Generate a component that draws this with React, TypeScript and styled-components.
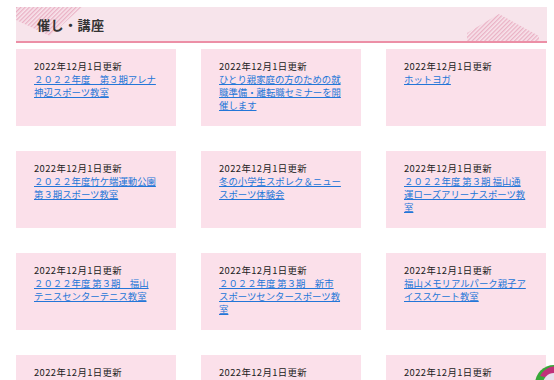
import React from "react";
import styled, { createGlobalStyle } from "styled-components";

const Global = createGlobalStyle`
  html, body { margin: 0; padding: 0; background: #fff; overflow: hidden; }
  body { font-family: "Noto Sans CJK JP", "Noto Sans", sans-serif; color: #222; }
`;

const Page = styled.div`
  padding: 7px 0 0 16px;
  width: 531px;
`;

const Header = styled.div`
  position: relative;
  height: 34px;
  background: #f7e4eb;
  border-bottom: 2px solid #ec8fa6;
  display: flex;
  align-items: center;
  padding-left: 21px;
  overflow: hidden;
`;

const Title = styled.h2`
  position: relative;
  z-index: 1;
  margin: 0;
  font-size: 13px;
  font-weight: 700;
  color: #333;
  letter-spacing: 0.5px;
`;

const Deco = styled.svg`
  position: absolute;
  top: 0;
  pointer-events: none;
`;

const Grid = styled.div`
  display: grid;
  grid-template-columns: repeat(3, 160px);
  column-gap: 25px;
  row-gap: 25px;
  margin-top: 6px;
`;

const Card = styled.div`
  background: #fbe0ea;
  height: 77px;
  box-sizing: border-box;
  padding: 11px 20px 0 18px;
  font-size: 9.4px;
  line-height: 13px;
`;

const DateText = styled.div`
  color: #222;
  letter-spacing: 0.4px;
`;

const Link = styled.a`
  color: #2376d8;
  text-decoration: underline;
  text-underline-offset: 1px;
`;

const Mascot = styled.svg`
  position: fixed;
  right: -20px;
  bottom: -24px;
`;

const items = [
  "２０２２年度　第３期アレナ神辺スポーツ教室",
  "ひとり親家庭の方のための就職準備・離転職セミナーを開催します",
  "ホットヨガ",
  "２０２２年度竹ケ端運動公園第３期スポーツ教室",
  "冬の小学生スポレク＆ニュースポーツ体験会",
  "２０２２年度 第３期 福山通運ローズアリーナスポーツ教室",
  "２０２２年度 第３期　福山テニスセンターテニス教室",
  "２０２２年度 第３期　新市スポーツセンタースポーツ教室",
  "福山メモリアルパーク親子アイススケート教室",
  "２０２２年度 第３期　沼隈スポーツ教室",
  "２０２２年度 第３期　内海スポーツ教室",
  "２０２２年度 第３期　神辺スポーツ教室",
];

function Hatch({ id }: { id: string }) {
  return (
    <defs>
      <pattern id={id} width="3" height="3" patternUnits="userSpaceOnUse" patternTransform="rotate(45)">
        <rect width="3" height="3" fill="#f7e4eb" />
        <rect width="1.3" height="3" fill="#eab0c4" />
      </pattern>
    </defs>
  );
}

export default function App() {
  return (
    <>
      <Global />
      <Page>
        <Header>
          <Deco width="70" height="34" style={{ left: 0 }}>
            <Hatch id="h1" />
            <polygon points="0,0 66,0 34,29 0,13" fill="url(#h1)" />
          </Deco>
          <Deco width="80" height="34" style={{ right: 0 }}>
            <Hatch id="h2" />
            <polygon points="0,34 0,26 32,7 72,29 72,34" fill="url(#h2)" />
          </Deco>
          <Title>催し・講座</Title>
        </Header>
        <Grid>
          {items.map((t, i) => (
            <Card key={i}>
              <DateText>2022年12月1日更新</DateText>
              <Link href="#">{t}</Link>
            </Card>
          ))}
        </Grid>
      </Page>
      <Mascot width="40" height="40" viewBox="0 0 40 40">
        <circle cx="20" cy="20" r="19" fill="#3aa83a" />
        <path d="M6 12 A18 18 0 0 1 30 4 L24 16 Z" fill="#c0307a" />
        <circle cx="20" cy="20" r="11" fill="#e8e0ec" />
        <path d="M2 18 L14 18" stroke="#7a2a3a" strokeWidth="2" />
      </Mascot>
    </>
  );
}
